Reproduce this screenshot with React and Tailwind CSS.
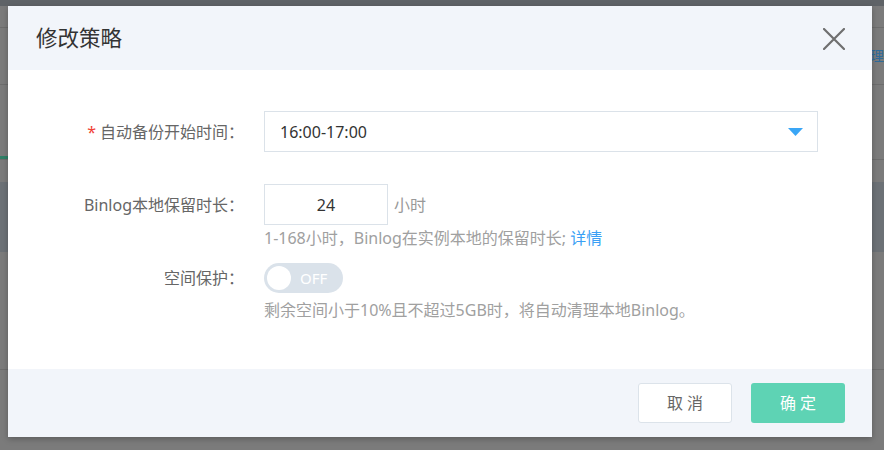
import { useState } from 'react'

const FONT = { fontFamily: '"Noto Sans", "Noto Sans CJK SC", sans-serif' }

function CloseIcon() {
  return (
    <svg width="22" height="22" viewBox="0 0 22 22" fill="none">
      <path d="M1 1 L21 21 M21 1 L1 21" stroke="#6f6f6f" strokeWidth="2.2" strokeLinecap="round" />
    </svg>
  )
}

function Caret() {
  return (
    <svg width="15" height="8" viewBox="0 0 15 8">
      <path d="M0 0 H15 L7.5 8 Z" fill="#3aa6f6" />
    </svg>
  )
}

function Backdrop() {
  // dimmed page behind the dialog
  return (
    <div className="flex flex-col w-full h-full bg-[#7b7b7b]">
      <div className="h-[6px] bg-[#5f6367]" />
      <div className="h-[22px] border-b border-[#6d6d6d]" />
      <div className="h-[57px] border-b border-[#6d6d6d] flex justify-end items-start overflow-hidden">
        <span className="mt-[19px] text-[14px] leading-[18px] text-[#2f6b9b]">理</span>
      </div>
      <div className="h-[74px] flex items-end">
        <div className="w-[8px] h-[3px] bg-[#2f7f66]" />
      </div>
      <div className="h-[23px] border-t border-[#6d6d6d]" />
      <div className="h-[70px] bg-[#6c7176]" />
      <div className="h-[118px] border-b border-[#6d6d6d]" />
      <div className="flex-1" />
    </div>
  )
}

export default function App() {
  const [on, setOn] = useState(false)

  return (
    <div className="relative w-[884px] h-[450px] overflow-hidden" style={FONT}>
      <Backdrop />

      {/* Dialog */}
      <div className="absolute left-[8px] top-[6px] w-[864px] h-[431px] flex flex-col bg-white shadow-[0_2px_6px_rgba(0,0,0,0.25)]">

        {/* Header */}
        <div className="h-[64px] bg-[#f2f5fa] flex items-center justify-between pl-[28px] pr-[27px]">
          <h2 className="text-[21.5px] text-[#333] font-normal">修改策略</h2>
          <button className="mt-[1px]"><CloseIcon /></button>
        </div>

        {/* Body */}
        <div className="h-[299px] pt-[41px] text-[16px]">
          <div className="flex items-center h-[41px]">
            <div className="w-[236px] text-right text-[#666]">
              <span className="text-[#f04134] mr-[4px]">*</span>自动备份开始时间：
            </div>
            <div className="ml-[20px] w-[554px] h-[41px] border border-[#dbe2e9] flex items-center justify-between pl-[15px] pr-[14px] text-[#333]">
              <span>16:00-17:00</span>
              <Caret />
            </div>
          </div>

          <div className="flex items-center h-[41px] mt-[32px]">
            <div className="w-[236px] text-right text-[#666]">Binlog本地保留时长：</div>
            <div className="ml-[20px] w-[124px] h-[41px] border border-[#dbe2e9] flex items-center justify-center text-[#333]">
              24
            </div>
            <span className="ml-[6px] text-[#999]">小时</span>
          </div>
          <div className="ml-[256px] mt-[3px] leading-[20px] text-[#a0a0a0]">
            1-168小时，Binlog在实例本地的保留时长; <span className="text-[#3a9ff5]">详情</span>
          </div>

          <div className="flex items-center h-[30px] mt-[15px]">
            <div className="w-[236px] text-right text-[#666]">空间保护：</div>
            <button
              onClick={() => setOn(!on)}
              className="ml-[20px] w-[79px] h-[30px] rounded-full bg-[#dae2ea] flex items-center pl-[3px]"
            >
              <span className="w-[24px] h-[24px] rounded-full bg-white" />
              <span className="ml-[9px] text-white text-[15px]">OFF</span>
            </button>
          </div>
          <div className="ml-[256px] mt-[7px] leading-[20px] text-[#a0a0a0]">
            剩余空间小于10%且不超过5GB时，将自动清理本地Binlog。
          </div>
        </div>

        {/* Footer */}
        <div className="flex-1 bg-[#f2f5fa] flex justify-end items-start pt-[14px] pr-[27px] gap-[19px]">
          <button className="w-[94px] h-[40px] rounded-[3px] border border-[#dce3ea] bg-white text-[#666] text-[16px] tracking-[4px] pl-[4px]">
            取消
          </button>
          <button className="w-[94px] h-[40px] rounded-[3px] bg-[#5ed3b4] text-white text-[16px] tracking-[4px] pl-[4px]">
            确定
          </button>
        </div>
      </div>
    </div>
  )
}
